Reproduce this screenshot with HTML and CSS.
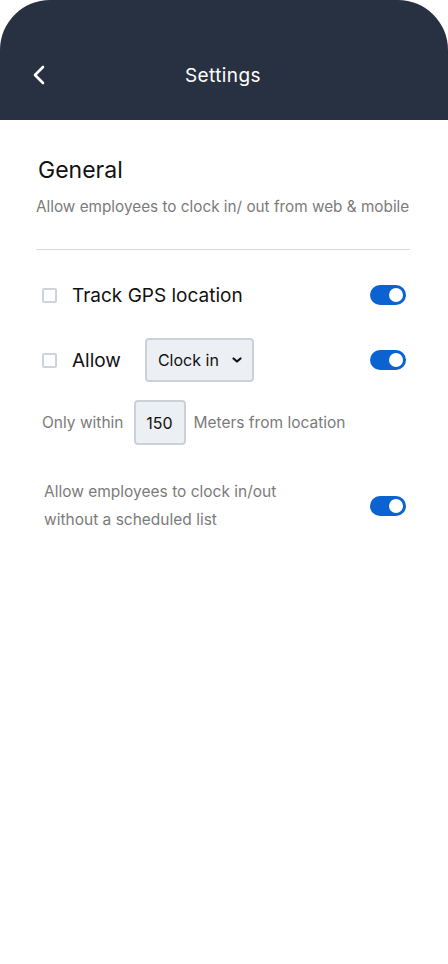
FILE: index.html
```html
<!DOCTYPE html>
<html>
<head>
<meta charset="utf-8">
<link rel="stylesheet" href="styles.css">
</head>
<body>
<div class="screen">
  <header class="topbar">
    <div class="bar">
      <svg class="back" width="14" height="20" viewBox="0 0 14 20"><path d="M11 2 L3 10 L11 18" fill="none" stroke="#fff" stroke-width="2.6" stroke-linecap="round" stroke-linejoin="round"/></svg>
      <div class="title">Settings</div>
    </div>
  </header>
  <main class="content">
    <h1 class="heading">General</h1>
    <p class="sub">Allow employees to clock in/ out from web &amp; mobile</p>
    <div class="divider"></div>

    <div class="row row1">
      <span class="check"></span>
      <span class="label">Track GPS location</span>
      <span class="toggle"><span class="knob"></span></span>
    </div>

    <div class="row row2">
      <span class="check"></span>
      <span class="label">Allow</span>
      <span class="select">Clock in
        <svg width="12" height="8" viewBox="0 0 12 8"><path d="M2.5 2.5 L6 5.5 L9.5 2.5" fill="none" stroke="#111" stroke-width="2.2" stroke-linecap="round" stroke-linejoin="round"/></svg>
      </span>
      <span class="toggle"><span class="knob"></span></span>
    </div>

    <div class="row row3">
      <span class="muted">Only within</span>
      <span class="num">150</span>
      <span class="muted">Meters from location</span>
    </div>

    <div class="row row4">
      <span class="muted multi">Allow employees to clock in/out<br>without a scheduled list</span>
      <span class="toggle"><span class="knob"></span></span>
    </div>
  </main>
</div>
</body>
</html>
```

FILE: styles.css
```css
* { box-sizing: border-box; }
html, body { margin: 0; padding: 0; background: #fff; }
body {
  font-family: Inter, "Noto Sans", sans-serif;
  width: 448px;
  height: 964px;
  overflow: hidden;
}
.topbar {
  height: 120px;
  background: #283141;
  border-radius: 50px 50px 0 0;
  padding-top: 55px;
}
.bar {
  position: relative;
  height: 40px;
  display: flex;
  align-items: center;
  justify-content: center;
}
.back {
  position: absolute;
  left: 32px;
  top: 10px;
}
.title {
  color: #fff;
  font-size: 19px;
  letter-spacing: 0.4px;
  margin-left: -2px;
}
.content {
  padding: 0 38px 0 36px;
}
.heading {
  margin: 37px 0 0 2px;
  font-size: 23px;
  line-height: 26px;
  font-weight: 400;
  color: #111;
}
.sub {
  margin: 14px 0 0 0;
  font-size: 15.3px;
  line-height: 20px;
  color: #7b7b7b;
  white-space: nowrap;
}
.divider {
  height: 1px;
  background: #d9d9e1;
  margin-top: 32px;
}
.row {
  display: flex;
  align-items: center;
  padding: 0 4px 0 6px;
}
.row1 { height: 40px; margin-top: 25px; }
.row2 { height: 44px; margin-top: 23px; }
.row3 { height: 45px; margin-top: 18px; }
.row4 { margin-top: 33px; padding-left: 8px; }
.check {
  width: 15px;
  height: 15px;
  border: 2px solid #cdd3da;
  border-radius: 2px;
  margin-right: 15px;
  flex: none;
}
.label {
  font-size: 19px;
  color: #111;
}
.row1 .label { flex: 1; }
.row2 .label { margin-right: 24px; }
.toggle {
  margin-left: auto;
  width: 36px;
  height: 20px;
  border-radius: 10px;
  background: #0a63d1;
  position: relative;
  flex: none;
}
.knob {
  position: absolute;
  right: 3px;
  top: 3px;
  width: 14px;
  height: 14px;
  border-radius: 50%;
  background: #fff;
}
.select {
  width: 109px;
  height: 44px;
  background: #eceff3;
  border: 2px solid #cbd1d9;
  border-radius: 4px;
  display: flex;
  align-items: center;
  padding-left: 11px;
  font-size: 16px;
  color: #111;
  gap: 12px;
}
.muted {
  font-size: 15.5px;
  color: #7b7b7b;
}
.num {
  width: 52px;
  height: 45px;
  margin: 0 8px 0 10px;
  background: #eceff3;
  border: 2px solid #cbd1d9;
  border-radius: 4px;
  display: flex;
  align-items: center;
  justify-content: center;
  font-size: 16px;
  color: #111;
}
.multi {
  font-size: 15.5px;
  line-height: 28px;
}
```
